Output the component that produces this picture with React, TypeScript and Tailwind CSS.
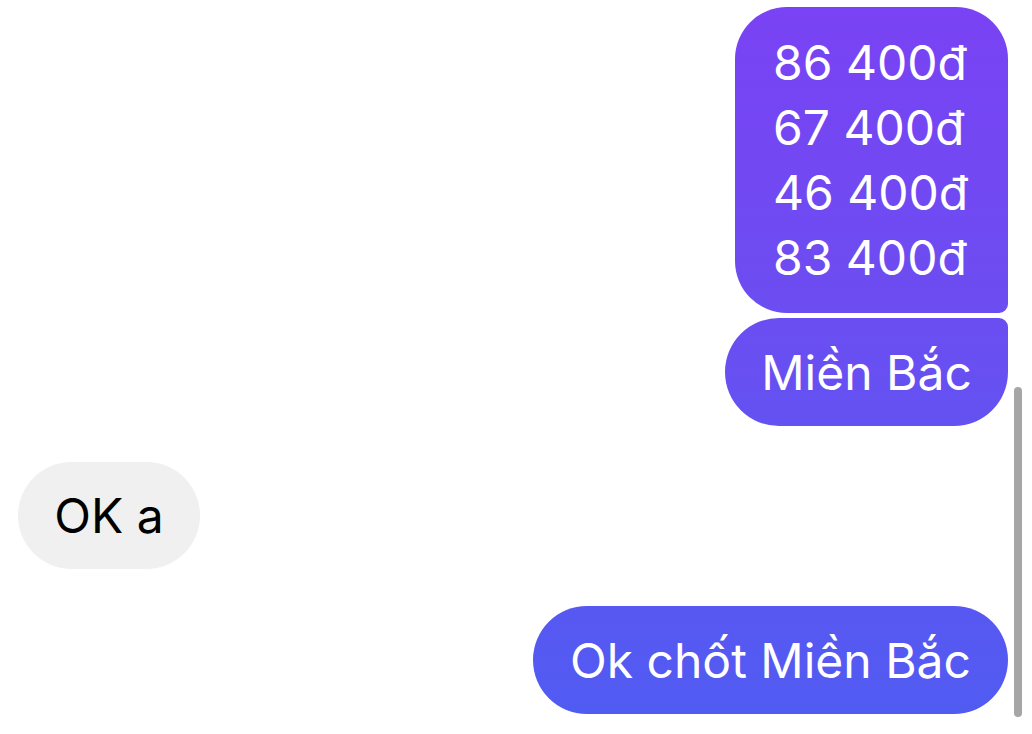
import React from "react";

const grad =
  "bg-[linear-gradient(180deg,#7a42f4_0%,#6a4ef1_45%,#4f5cf2_100%)] bg-fixed";

export default function App() {
  return (
    <div
      className="relative w-[1032px] h-[734px] overflow-hidden bg-white"
      style={{ fontFamily: '"Inter", "Noto Sans", sans-serif' }}
    >
      <div className="flex flex-col pt-[7px] pl-[18px] pr-[24px] whitespace-nowrap">
        <div className="flex justify-end">
          <div
            className={`${grad} text-white text-[48px] leading-[65px] pl-[38px] py-[23px] rounded-tl-[52px] rounded-tr-[52px] rounded-bl-[52px] rounded-br-[9px] w-[273px]`}
          >
            <div>86 400đ</div>
            <div>67 400đ</div>
            <div>46 400đ</div>
            <div>83 400đ</div>
          </div>
        </div>
        <div className="flex justify-end mt-[5px]">
          <div
            className={`${grad} text-white text-[48px] leading-[65px] h-[108px] w-[283px] flex items-center justify-center rounded-tl-[54px] rounded-bl-[54px] rounded-br-[54px] rounded-tr-[9px]`}
          >
            Miền Bắc
          </div>
        </div>
        <div className="flex justify-start mt-[36px]">
          <div className="bg-[#f0f0f0] text-black text-[48px] leading-[65px] h-[107px] w-[182px] flex items-center justify-center rounded-full">
            OK a
          </div>
        </div>
        <div className="flex justify-end mt-[37px]">
          <div
            className={`${grad} text-white text-[48px] leading-[65px] h-[108px] w-[475px] flex items-center justify-center rounded-full`}
          >
            Ok chốt Miền Bắc
          </div>
        </div>
      </div>
      <div className="absolute left-[1014px] top-[387px] w-[8px] h-[330px] rounded-full bg-[#a6a6a6]" />
    </div>
  );
}
